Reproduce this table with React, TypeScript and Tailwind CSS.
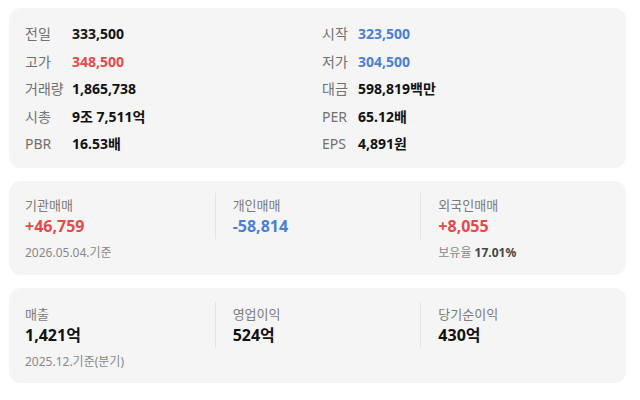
import React from "react";

const RED = "text-[#e5484d]";
const BLUE = "text-[#4a7fd3]";

type Row = { label: string; value: string; color?: string };

const left: Row[] = [
  { label: "전일", value: "333,500" },
  { label: "고가", value: "348,500", color: RED },
  { label: "거래량", value: "1,865,738" },
  { label: "시총", value: "9조 7,511억" },
  { label: "PBR", value: "16.53배" },
];
const right: Row[] = [
  { label: "시작", value: "323,500", color: BLUE },
  { label: "저가", value: "304,500", color: BLUE },
  { label: "대금", value: "598,819백만" },
  { label: "PER", value: "65.12배" },
  { label: "EPS", value: "4,891원" },
];

function Col({ rows, labelW, className }: { rows: Row[]; labelW: string; className?: string }) {
  return (
    <div className={"flex flex-col " + (className ?? "")}>
      {rows.map((r) => (
        <div key={r.label} className="flex items-center h-[27.5px]">
          <span className={"text-[14px] text-[#707070] shrink-0 " + labelW}>{r.label}</span>
          <span className={"text-[14px] font-bold " + (r.color ?? "text-[#111]")}>{r.value}</span>
        </div>
      ))}
    </div>
  );
}

function StatCol({
  label,
  value,
  color,
  sub,
  first,
}: {
  label: string;
  value: string;
  color: string;
  sub?: React.ReactNode;
  first?: boolean;
}) {
  return (
    <div className="flex flex-col">
      <div className={"flex flex-col " + (first ? "pl-4" : "border-l border-[#e4e4e4] pl-[17px]")}>
        <div className="text-[13px] leading-[20px] text-[#7a7a7a] mt-[2px]">{label}</div>
        <div className={"text-[16px] leading-[22px] font-bold mb-[2px] " + color}>{value}</div>
      </div>
      {sub && (
        <div className={"text-[12px] leading-[20px] text-[#888] mt-[4px] " + (first ? "pl-4" : "pl-[18px]")}>
          {sub}
        </div>
      )}
    </div>
  );
}

export default function App() {
  return (
    <div
      className="w-[640px] h-[400px] bg-white pt-2 pl-[9px] pr-[14px] flex flex-col gap-[13px]"
      style={{ fontFamily: '"Noto Sans", "Noto Sans CJK KR", sans-serif' }}
    >
      <div className="bg-[#f5f5f5] rounded-[12px] pl-4 pt-3 pb-[10.5px] flex">
        <Col rows={left} labelW="w-[47px]" className="w-[297px]" />
        <Col rows={right} labelW="w-[36px]" />
      </div>

      <div className="bg-[#f5f5f5] rounded-[12px] pt-3 h-[94px] shrink-0 grid grid-cols-3 content-start">
        <StatCol first label="기관매매" value="+46,759" color={RED} sub="2026.05.04.기준" />
        <StatCol label="개인매매" value="-58,814" color={BLUE} />
        <StatCol
          label="외국인매매"
          value="+8,055"
          color={RED}
          sub={
            <span>
              보유율 <span className="font-bold text-[#444]">17.01%</span>
            </span>
          }
        />
      </div>

      <div className="bg-[#f5f5f5] rounded-[12px] pt-[14px] h-[95px] shrink-0 grid grid-cols-3 content-start">
        <StatCol first label="매출" value="1,421억" color="text-[#111]" sub="2025.12.기준(분기)" />
        <StatCol label="영업이익" value="524억" color="text-[#111]" />
        <StatCol label="당기순이익" value="430억" color="text-[#111]" />
      </div>
    </div>
  );
}
